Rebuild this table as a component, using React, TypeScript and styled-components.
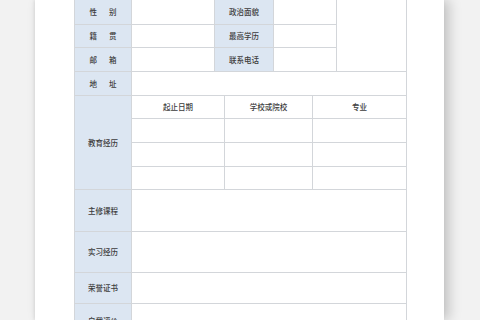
import React from 'react';
import styled, { createGlobalStyle } from 'styled-components';

const GlobalStyle = createGlobalStyle`
  html, body {
    margin: 0;
    padding: 0;
    height: 100%;
    overflow: hidden;
    background: #f2f2f2;
    font-family: "Noto Sans CJK SC", "Liberation Sans", sans-serif;
  }
`;

const Stage = styled.div`
  width: 480px;
  height: 320px;
  display: flex;
  background: #f2f2f2;
  overflow: hidden;
`;

const Sheet = styled.div`
  margin-left: 35px;
  width: 409px;
  height: 320px;
  background: #ffffff;
  box-shadow: -1px 0 3px rgba(0, 0, 0, 0.08), 5px 0 12px rgba(0, 0, 0, 0.2);
  padding-left: 39px;
  box-sizing: border-box;
`;

const Table = styled.div`
  width: 333px;
  display: flex;
  flex-direction: column;
  gap: 1px;
  background: #d3d6da;
  padding: 0 1px 1px;
  box-sizing: border-box;
`;

const Section = styled.div<{ $cols: string; $rows: string }>`
  display: grid;
  grid-template-columns: ${p => p.$cols};
  grid-template-rows: ${p => p.$rows};
  gap: 1px;
`;

const Cell = styled.div<{ $label?: boolean; $span?: string; $rowSpan?: string }>`
  background: ${p => (p.$label ? '#dce6f2' : '#ffffff')};
  grid-column: ${p => p.$span || 'auto'};
  grid-row: ${p => p.$rowSpan || 'auto'};
  display: flex;
  align-items: center;
  justify-content: center;
  font-size: 7.5px;
  font-weight: 500;
  line-height: 1;
  color: #3c3c3c;
  white-space: nowrap;
`;

const Spread = styled.span`
  display: flex;
  gap: 12px;
`;

const TOP_COLS = '56px 82px 58px 62px 69px';
const EDU_COLS = '56px 92px 87px 93px';
const WIDE_COLS = '56px 274px';

const Pair: React.FC<{ text: string }> = ({ text }) => (
  <Spread>
    {text.split('').map((c, i) => (
      <span key={i}>{c}</span>
    ))}
  </Spread>
);

const blocks = [
  { label: '主修课程', h: 41 },
  { label: '实习经历', h: 40 },
  { label: '荣誉证书', h: 30 },
  { label: '自我评价', h: 34 },
];

export default function App() {
  return (
    <>
      <GlobalStyle />
      <Stage>
        <Sheet>
          <Table>
            <Section $cols={TOP_COLS} $rows="24px 22px 23px 23px">
              <Cell $label><Pair text="性别" /></Cell>
              <Cell />
              <Cell $label>政治面貌</Cell>
              <Cell />
              <Cell $rowSpan="1 / span 3" $span="5" />
              <Cell $label><Pair text="籍贯" /></Cell>
              <Cell />
              <Cell $label>最高学历</Cell>
              <Cell />
              <Cell $label><Pair text="邮箱" /></Cell>
              <Cell />
              <Cell $label>联系电话</Cell>
              <Cell />
              <Cell $label><Pair text="地址" /></Cell>
              <Cell $span="2 / span 4" />
            </Section>

            <Section $cols={EDU_COLS} $rows="22px 23px 23px 22px">
              <Cell $label $rowSpan="1 / span 4">教育经历</Cell>
              <Cell>起止日期</Cell>
              <Cell>学校或院校</Cell>
              <Cell>专业</Cell>
              {Array.from({ length: 9 }, (_, i) => (
                <Cell key={i} />
              ))}
            </Section>

            {blocks.map(b => (
              <Section key={b.label} $cols={WIDE_COLS} $rows={`${b.h}px`}>
                <Cell $label>{b.label}</Cell>
                <Cell />
              </Section>
            ))}
          </Table>
        </Sheet>
      </Stage>
    </>
  );
}
